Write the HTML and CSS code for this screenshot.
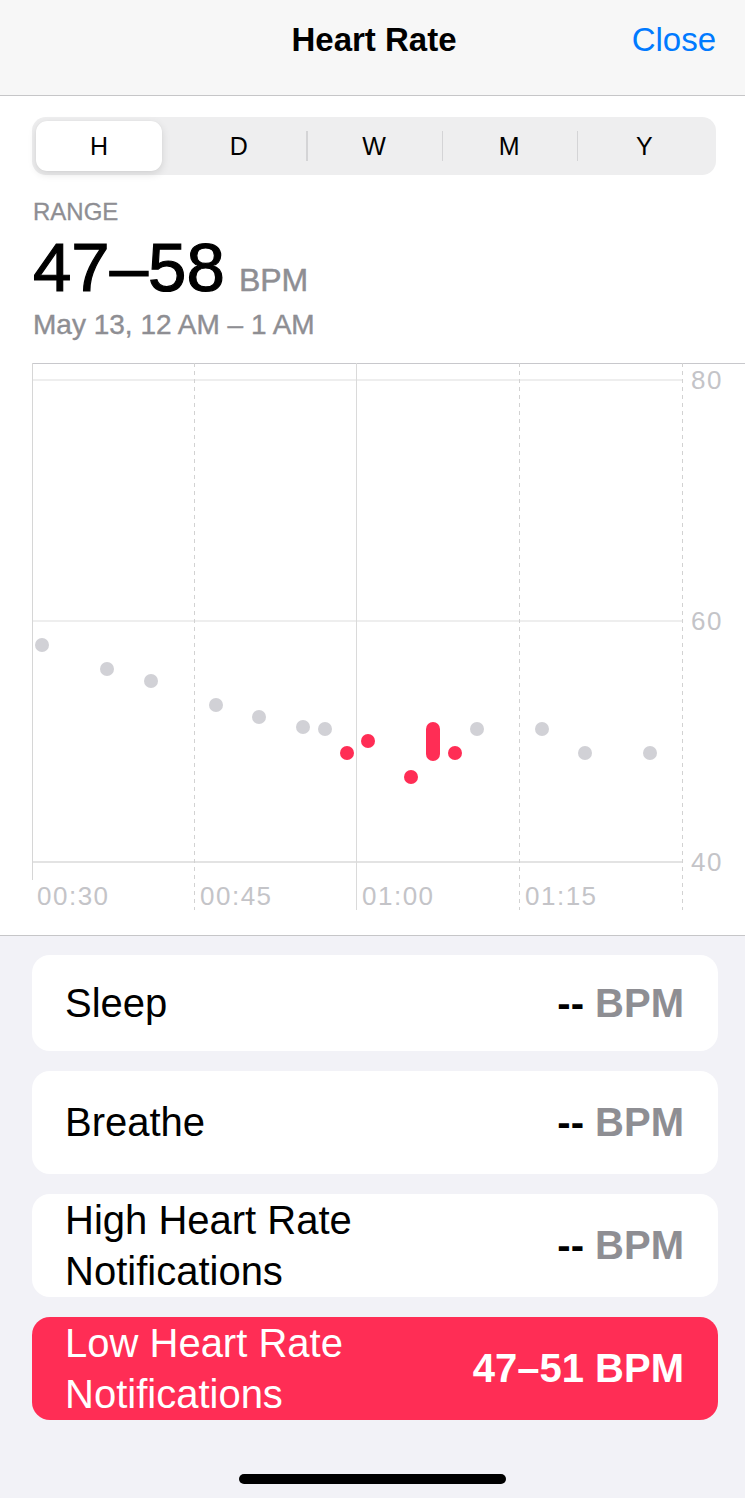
FILE: index.html
```html
<!DOCTYPE html>
<html lang="en">
<head>
<meta charset="UTF-8" />
<title>Heart Rate</title>
<link rel="stylesheet" href="styles.css">
</head>
<body>

<header class="navbar">
  <span class="nav-side"></span>
  <h1 class="nav-title">Heart Rate</h1>
  <a class="nav-close" href="#">Close</a>
</header>

<section class="top">
  <div class="segmented">
    <button class="seg seg-active">H</button>
    <button class="seg">D</button>
    <button class="seg seg-sep">W</button>
    <button class="seg seg-sep">M</button>
    <button class="seg seg-sep">Y</button>
  </div>

  <div class="summary">
    <div class="summary-label">RANGE</div>
    <div class="summary-value">47–58<span class="summary-unit">BPM</span></div>
    <div class="summary-date">May 13, 12 AM – 1 AM</div>
  </div>

  <svg class="chart" width="745" height="572" viewBox="0 0 745 572">
    <!-- grid -->
    <line x1="32" y1="0.5" x2="745" y2="0.5" stroke="#c8c8cc" stroke-width="1" />
    <line x1="32" y1="17" x2="682" y2="17" stroke="#eeeeee" stroke-width="2" />
    <line x1="32" y1="258" x2="682" y2="258" stroke="#eeeeee" stroke-width="2" />
    <line x1="32" y1="499" x2="682" y2="499" stroke="#e3e3e3" stroke-width="2" />
    <line x1="32.5" y1="0" x2="32.5" y2="517" stroke="#d6d6d6" stroke-width="1" />
    <line x1="194.5" y1="0" x2="194.5" y2="547" stroke="#d2d2d2" stroke-width="1" stroke-dasharray="4 4" />
    <line x1="356.5" y1="0" x2="356.5" y2="547" stroke="#dadada" stroke-width="1" />
    <line x1="519.5" y1="0" x2="519.5" y2="547" stroke="#d2d2d2" stroke-width="1" stroke-dasharray="4 4" />
    <line x1="682.5" y1="0" x2="682.5" y2="547" stroke="#d2d2d2" stroke-width="1" stroke-dasharray="4 4" />

    <!-- axis labels -->
    <text class="axis" x="691" y="26">80</text>
    <text class="axis" x="691" y="267">60</text>
    <text class="axis" x="691" y="508">40</text>
    <text class="axis" x="37" y="542">00:30</text>
    <text class="axis" x="200" y="542">00:45</text>
    <text class="axis" x="362" y="542">01:00</text>
    <text class="axis" x="525" y="542">01:15</text>

    <!-- readings -->
    <g fill="#d1d1d6">
      <circle cx="42" cy="282" r="7" />
      <circle cx="107" cy="306" r="7" />
      <circle cx="151" cy="318" r="7" />
      <circle cx="216" cy="342" r="7" />
      <circle cx="259" cy="354" r="7" />
      <circle cx="303" cy="364" r="7" />
      <circle cx="325" cy="366" r="7" />
      <circle cx="477" cy="366" r="7" />
      <circle cx="542" cy="366" r="7" />
      <circle cx="585" cy="390" r="7" />
      <circle cx="650" cy="390" r="7" />
    </g>
    <g fill="#ff2d55">
      <circle cx="347" cy="390" r="7" />
      <circle cx="368" cy="378" r="7" />
      <circle cx="411" cy="414" r="7" />
      <rect x="426" y="359" width="14" height="39" rx="7" />
      <circle cx="455" cy="390" r="7" />
    </g>
  </svg>
</section>

<section class="list">
  <div class="card card-short">
    <span class="card-name">Sleep</span>
    <span class="card-value"><b>--</b> BPM</span>
  </div>
  <div class="card">
    <span class="card-name">Breathe</span>
    <span class="card-value"><b>--</b> BPM</span>
  </div>
  <div class="card">
    <span class="card-name">High Heart Rate<br>Notifications</span>
    <span class="card-value"><b>--</b> BPM</span>
  </div>
  <div class="card card-alert">
    <span class="card-name">Low Heart Rate<br>Notifications</span>
    <span class="card-value">47–51 BPM</span>
  </div>
</section>

<div class="home-indicator"></div>

</body>
</html>
```

FILE: styles.css
```css
body {
  margin: 0;
  font-family: 'Liberation Sans', Arial, sans-serif;
  background: #f2f2f7;
  color: #000;
}
.navbar {
  height: 75px;
  background: #f7f7f7;
  border-bottom: 1px solid #c6c6c8;
  display: grid;
  grid-template-columns: 1fr auto 1fr;
  align-items: start;
  padding: 20px 29px 0 32px;
}
.nav-title {
  margin: 0;
  font-size: 33px;
  line-height: 40px;
  font-weight: bold;
}
.nav-close {
  justify-self: end;
  font-size: 33px;
  line-height: 40px;
  color: #007aff;
  text-decoration: none;
}
.top {
  background: #fff;
  border-bottom: 1px solid #c6c6c8;
  padding-top: 21px;
}
.segmented {
  margin: 0 29px 0 32px;
  height: 58px;
  box-sizing: border-box;
  padding: 4px;
  background: #eeeeef;
  border-radius: 14px;
  display: grid;
  grid-template-columns: repeat(5, 1fr);
}
.seg {
  border: none;
  background: none;
  font-family: inherit;
  font-size: 25px;
  color: #000;
  padding: 0;
  position: relative;
}
.seg-active {
  background: #fff;
  border-radius: 11px;
  margin-right: 9px;
  box-shadow: 0 3px 8px rgba(0, 0, 0, 0.12), 0 0 1px rgba(0, 0, 0, 0.08);
}
.seg-sep::before {
  content: "";
  position: absolute;
  left: 0;
  top: 10px;
  bottom: 10px;
  width: 1.5px;
  background: #d4d4d6;
}
.summary {
  padding: 0 32px 0 33px;
}
.summary-label {
  margin-top: 23px;
  font-size: 24px;
  line-height: 28px;
  color: #8e8e93;
  -webkit-text-stroke: 0.3px #8e8e93;
}
.summary-value {
  margin-top: 6px;
  font-size: 69px;
  line-height: 72px;
  -webkit-text-stroke: 1.2px #000;
}
.summary-unit {
  font-size: 32px;
  line-height: 1;
  color: #8e8e93;
  margin-left: 14px;
  -webkit-text-stroke: 0.5px #8e8e93;
}
.summary-date {
  margin-top: 4px;
  font-size: 28px;
  line-height: 34px;
  color: #8e8e93;
  -webkit-text-stroke: 0.4px #8e8e93;
}
.chart {
  display: block;
  margin-top: 21px;
}
.axis {
  font-family: 'Liberation Sans', Arial, sans-serif;
  font-size: 26px;
  letter-spacing: 1.5px;
  fill: #c4c4c8;
}
.list {
  padding: 19px 27px 0 32px;
  display: flex;
  flex-direction: column;
  gap: 20px;
}
.card {
  background: #fff;
  border-radius: 18px;
  min-height: 103px;
  padding: 0 34px 0 33px;
  display: flex;
  align-items: center;
  justify-content: space-between;
  font-size: 40px;
  line-height: 51px;
}
.card-short {
  min-height: 96px;
}
.card-value {
  font-weight: bold;
  color: #8e8e93;
}
.card-value b {
  color: #000;
}
.card-alert {
  background: #ff2d55;
  color: #fff;
}
.card-alert .card-value {
  color: #fff;
}
.home-indicator {
  width: 267px;
  height: 10px;
  border-radius: 5px;
  background: #000;
  margin: 54px auto 0;
}
```
